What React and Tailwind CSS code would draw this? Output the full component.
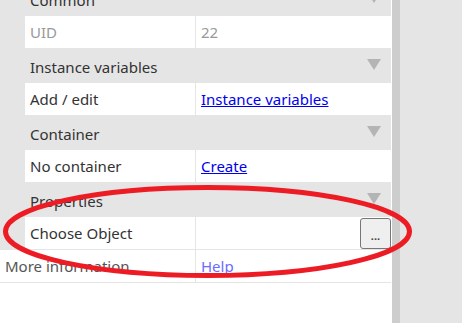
export default function App() {
  const font = { fontFamily: '"Noto Sans", "Open Sans", sans-serif' };

  const Header = ({ title }) => (
    <div className="relative h-[35px] shrink-0 bg-[#e5e5e5] pl-[30px] pt-[3px] flex items-center text-[15px] text-[#333]">
      {title}
      <span className="absolute right-[10px] top-[11px] w-0 h-0 border-l-[7.5px] border-r-[7.5px] border-t-[11px] border-l-transparent border-r-transparent border-t-[#b4b4b4]" />
    </div>
  );

  const Row = ({ label, children, muted }) => (
    <div className="flex h-[32px] shrink-0">
      <div className="w-[25px] bg-[#e5e5e5]" />
      <div className={`w-[171px] border-r border-[#e5e5e5] pl-[5px] flex items-center text-[15px] ${muted ? 'text-[#999]' : 'text-[#333]'}`}>
        {label}
      </div>
      <div className={`flex-1 pl-[5px] flex items-center text-[15px] ${muted ? 'text-[#999]' : 'text-[#333]'}`}>
        {children}
      </div>
    </div>
  );

  return (
    <div className="relative flex w-[462px] h-[323px] overflow-hidden bg-[#e5e5e5]" style={font}>
      <div className="w-[392px] bg-white flex flex-col">
        <div className="w-[391px] flex flex-col mt-[-19px]">
          <Header title="Common" />
          <Row label="UID" muted>22</Row>
          <Header title="Instance variables" />
          <Row label="Add / edit">
            <a href="#" className="text-[#0000ee] underline">Instance variables</a>
          </Row>
          <Header title="Container" />
          <Row label="No container">
            <a href="#" className="text-[#0000ee] underline">Create</a>
          </Row>
          <Header title="Properties" />
          <div className="flex h-[32px] shrink-0">
            <div className="w-[25px] bg-[#e5e5e5]" />
            <div className="w-[171px] border-r border-[#e5e5e5] pl-[5px] flex items-center text-[15px] text-[#333]">
              Choose Object
            </div>
            <div className="flex-1 flex items-center justify-end">
              <button className="w-[31px] h-[31px] bg-[#efefef] border border-[#767676] rounded-[3px] text-[11px] font-bold leading-none text-[#444] pt-[4px]">
                ...
              </button>
            </div>
          </div>
          <div className="flex h-[34px] shrink-0 border-t border-b border-[#e5e5e5]">
            <div className="w-[196px] border-r border-[#e5e5e5] pl-[5px] flex items-center text-[15px] text-[#555]">
              More information
            </div>
            <div className="flex-1 pl-[5px] flex items-center text-[15px]">
              <a href="#" className="text-[#6b6bff] underline">Help</a>
            </div>
          </div>
        </div>
      </div>
      <div className="w-[8px] bg-[#cdcdcd]" />
      <div className="flex-1 bg-[#e5e5e5]" />
      <svg className="absolute inset-0 pointer-events-none" width="462" height="323">
        <ellipse cx="207.5" cy="231.5" rx="202" ry="44" fill="none" stroke="#ed1c24" strokeWidth="5" />
      </svg>
    </div>
  );
}
